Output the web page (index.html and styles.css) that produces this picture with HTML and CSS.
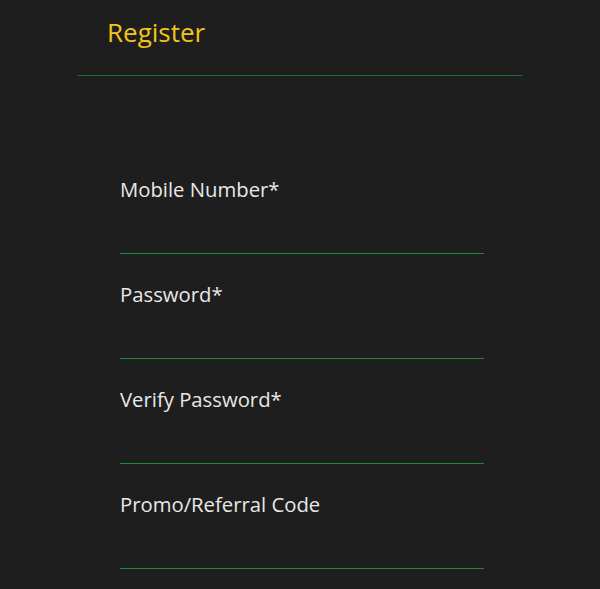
FILE: index.html
```html
<!DOCTYPE html>
<html lang="en">
<head>
<meta charset="utf-8">
<title>Register</title>
<link rel="stylesheet" href="styles.css">
</head>
<body>
<div class="page">
  <header class="header">
    <h1 class="title">Register</h1>
  </header>
  <form class="form">
    <div class="field"><label class="label">Mobile Number*</label><div class="line"></div></div>
    <div class="field"><label class="label">Password*</label><div class="line"></div></div>
    <div class="field"><label class="label">Verify Password*</label><div class="line"></div></div>
    <div class="field"><label class="label">Promo/Referral Code</label><div class="line"></div></div>
  </form>
</div>
</body>
</html>
```
FILE: styles.css
```css
html, body {
  margin: 0;
  padding: 0;
  background: #1e1e1e;
}
body {
  font-family: "Open Sans", "Noto Sans", sans-serif;
  color: #e6e6e6;
}
.page {
  width: 600px;
  height: 589px;
  overflow: hidden;
}
.header {
  margin-left: 78px;
  width: 444px;
  height: 76px;
  border-bottom: 1px solid #1c6e2b;
  box-sizing: border-box;
  padding-left: 29px;
  padding-top: 14px;
}
.title {
  margin: 0;
  font-size: 26px;
  font-weight: 400;
  line-height: 36px;
  color: #f2c41a;
}
.form {
  margin: 73px 0 0 120px;
  width: 364px;
}
.field {
  height: 105px;
  box-sizing: border-box;
  padding-top: 27px;
  display: flex;
  flex-direction: column;
}
.label {
  display: block;
  font-size: 20.3px;
  line-height: 27px;
  color: #e8e8e8;
}
.line {
  margin-top: auto;
  height: 1px;
  background: #1f8a30;
}
```
